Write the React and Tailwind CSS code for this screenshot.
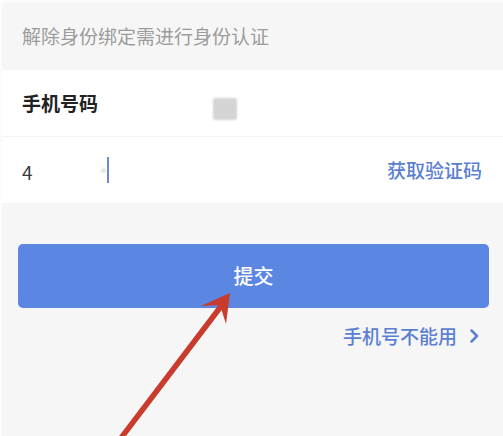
import React from 'react';

const Arrow = () => (
  <svg
    className="absolute inset-0 pointer-events-none"
    width="503"
    height="436"
    viewBox="0 0 503 436"
  >
    <line x1="116" y1="442" x2="220" y2="305" stroke="#c93b2d" strokeWidth="5.5" />
    <polygon points="228,293 199,306 218,305 224,324" fill="#c93b2d" />
  </svg>
);

const App = () => {
  return (
    <div className="relative w-[503px] h-[436px] overflow-hidden bg-[#f6f6f6] border-l-2 border-[#fcfcfc] font-['Noto_Sans_CJK_SC','Noto_Sans',sans-serif]">
      <div className="h-[3px] bg-[#fbfbfb]" />

      {/* Hint */}
      <div className="h-[67px] flex items-center pl-[20px] text-[19px] text-[#9c9c9c]">
        解除身份绑定需进行身份认证
      </div>

      {/* Form */}
      <div className="bg-white">
        <div className="h-[67px] flex items-center pl-[20px] border-b border-[#f4f4f4]">
          <span className="w-[191px] text-[19px] font-bold text-[#222]">手机号码</span>
          <span className="w-[24px] h-[22px] bg-[#d4d4d4] blur-[1px] rounded-[2px] mt-[11px]" />
        </div>
        <div className="h-[66px] flex items-center pl-[20px] pr-[21px]">
          <span className="text-[19px] text-[#3a3a3a] mt-[4px]">4</span>
          <span className="ml-[68px] w-[5px] h-[5px] rounded-full bg-[#e2e2e2] blur-[1px]" />
          <span className="ml-[1px] w-[2px] h-[26px] bg-[#7088d4]" />
          <span className="ml-auto text-[19px] font-medium text-[#5b7fd2]">获取验证码</span>
        </div>
      </div>

      {/* Submit */}
      <div className="pl-[16px] pr-[14px] pt-[41px]">
        <button className="w-full h-[64px] rounded-[5px] bg-[#5b87e2] text-white text-[20px] font-medium">
          提交
        </button>
        <div className="flex justify-end items-center mt-[14px] pr-[10px] text-[19px] font-medium text-[#5b7fd2]">
          <span>手机号不能用</span>
          <svg className="ml-[13px]" width="9" height="14" viewBox="0 0 9 14">
            <path d="M1.5 1.5 L7 7 L1.5 12.5" fill="none" stroke="#5b7fd2" strokeWidth="2.5" strokeLinecap="round" strokeLinejoin="round" />
          </svg>
        </div>
      </div>

      <Arrow />
    </div>
  );
};

export default App;
